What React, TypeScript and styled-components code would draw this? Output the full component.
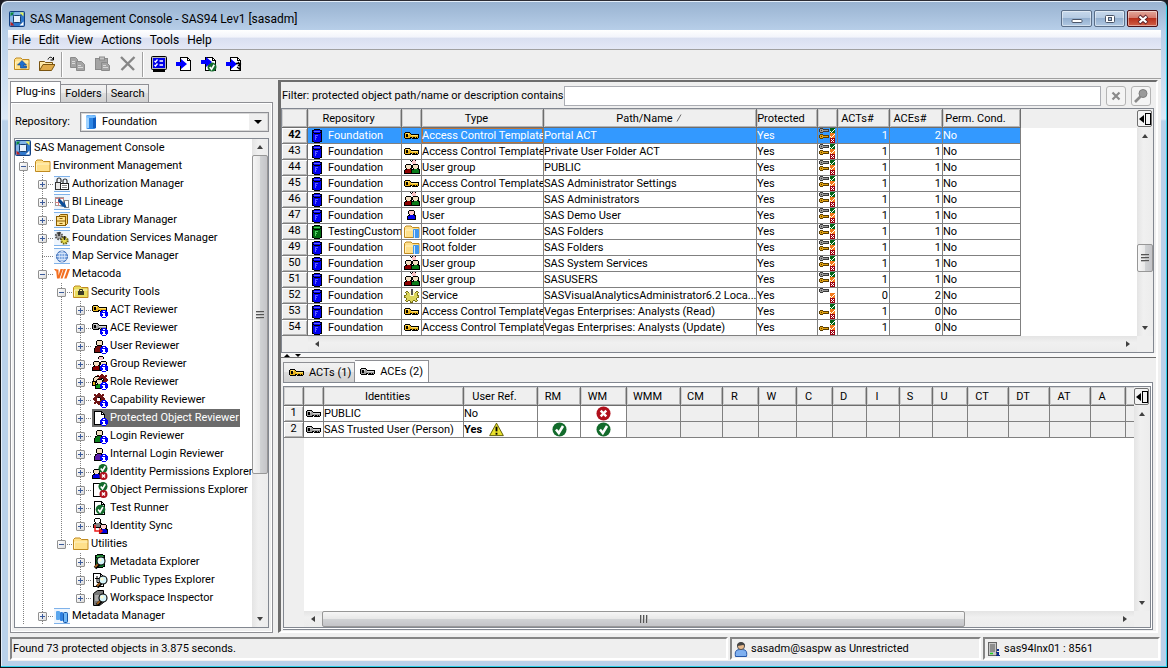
import React from 'react';
import styled, { createGlobalStyle, css } from 'styled-components';

const FACE = '#efefef';
const LINE = '#808080';
const FONT = "Roboto, Tahoma, sans-serif";

const GlobalStyle = createGlobalStyle`
  * { box-sizing: border-box; }
  body { margin: 0; background: #1c1c24; font-family: ${FONT}; font-size: 11px; line-height: 14px; color: #000; }
  button, input, select { font: inherit; color: inherit; padding: 0; margin: 0; border: 0; background: none; border-radius: 0; outline: 0; }
  svg { display: block; flex: none; }
  ul { list-style: none; margin: 0; padding: 0; }
`;

/* ---------- pixel icons ---------- */

type Palette = Record<string, string>;

const basePalette: Palette = {
  k: '#000000',
  w: '#ffffff',
  s: '#f3dfc1',
  g: '#e8b21c',
  y: '#ffe06a',
  l: '#c8c8c8',
  b: '#0000ff',
};

interface PixProps {
  rows: string[];
  pal?: Palette;
  x?: number;
  y?: number;
}

function Pix({ rows, pal = {}, x = 0, y = 0 }: PixProps) {
  const colours = { ...basePalette, ...pal };
  const out: React.ReactNode[] = [];
  rows.forEach((row, j) => {
    let i = 0;
    while (i < row.length) {
      const c = row[i];
      let n = 1;
      while (row[i + n] === c) n += 1;
      if (c !== '.') out.push(<rect key={`${i}-${j}`} x={x + i} y={y + j} width={n} height={1} fill={colours[c]} />);
      i += n;
    }
  });
  return <g shapeRendering="crispEdges">{out}</g>;
}

const KEY = [
  '.kkkkk.........',
  'kgyyygk........',
  'kgkkyggkkkkkkkk',
  'kgkkgggyyyyyyyk',
  'kgkkggggggggggk',
  'kgggggkkgkkgkgk',
  '.kkkkkk.kkkkkk.',
];
const PERSON = [
  '...kkkkk...',
  '..ksssssk..',
  '..ksssssk..',
  '..ksssssk..',
  '..ksssssk..',
  '...kkkkk...',
  '.kkcccckkk.',
  '.kccccccck.',
  'kccccccccck',
  'kccccccccck',
  'kccccccccck',
  'kccccccccck',
  'kkkkkkkkkkk',
];
const HALF_PERSON = [
  '..kkkkk..',
  '.ksssssk.',
  '.ksssssk.',
  '.ksssssk.',
  '..kssskk.',
  '.kkcccckk',
  'kccccccck',
  'kccccccck',
  'kccccccck',
  'kkkkkkkkk',
];
const INFO = [
  '..bbbb..',
  '.bbwwbb.',
  'bbbbbbbb',
  'bbwwwbbb',
  'bbbwwbbb',
  'bbbwwbbb',
  '.bwwwwb.',
  '..bbbb..',
];
const DOC = [
  'kkkkkkkk...',
  'kwwwwwwkk..',
  'kwwwwwwkwk.',
  'kwwwwwwkkkk',
  'kwwwwwwwwwk',
  'kwwwwwwwwwk',
  'kwwwwwwwwwk',
  'kwwwwwwwwwk',
  'kwwwwwwwwwk',
  'kwwwwwwwwwk',
  'kwwwwwwwwwk',
  'kwwwwwwwwwk',
  'kwwwwwwwwwk',
  'kkkkkkkkkkk',
];
const GEAR = [
  '.....cc.....',
  '.cc.cccc.cc.',
  '.cccccccccc.',
  '..cccccccc..',
  '.cccckkcccc.',
  'ccccwwwkcccc',
  'ccccwwwkcccc',
  '.cccwwwcccc.',
  '..cccccccc..',
  '.cccccccccc.',
  '.cc.cccc.cc.',
  '.....cc.....',
];
const SERVICE = [
  '.......kk......',
  '.......kk......',
  '..cc.wwkkww.cc.',
  '.cyyc.wkkw.cyyc',
  '..cyyywkkwyyyc.',
  '..cyyywkkwyyyc.',
  'ccyyyywwwwyyycc',
  'cyyyyyyyyyyyyyc',
  'ccyyyyyyyyyyycc',
  '..cyyyyyyyyyc..',
  '..cyyyyyyyyyc..',
  '.cyyccyyyccyyc.',
  '..cc..cyc..cc..',
  '......ccc......',
];
const CYLINDER = [
  '..kkkkkk..',
  'kkcccccckk',
  'kcllllllck',
  'kkcccccckk',
  'kckkkkkkck',
  'kcccccccck',
  'kcclllccck',
  'kcclccccck',
  'kccllcccck',
  'kcclccccck',
  'kcclccccck',
  'kcccccccck',
  'kkcccccckk',
  '..kkkkkk..',
];

const GREY_KEY: Palette = { g: '#a0a0a0', y: '#d8d8d8' };

const Key = ({ grey = false, y = 4 }: { grey?: boolean; y?: number }) => (
  <Pix rows={KEY} pal={grey ? GREY_KEY : undefined} y={y} />
);
const Info = () => <Pix rows={INFO} x={8} y={8} />;
const Tick = ({ x, y, r }: { x: number; y: number; r: number }) => (
  <g>
    <circle cx={x} cy={y} r={r} fill="#136b2c" />
    <path d={`M${x - r * 0.5} ${y}l${r * 0.4} ${r * 0.5}l${r * 0.6} ${-r}`} fill="none" stroke="#fff" strokeWidth={r * 0.36} />
  </g>
);
const Cross = ({ x, y, r }: { x: number; y: number; r: number }) => (
  <g>
    <circle cx={x} cy={y} r={r} fill="#b0101c" />
    <path
      d={`M${x - r * 0.4} ${y - r * 0.4}l${r * 0.8} ${r * 0.8}m0 ${-r * 0.8}l${-r * 0.8} ${r * 0.8}`}
      stroke="#fff"
      strokeWidth={r * 0.34}
    />
  </g>
);
const Lens = ({ x, y }: { x: number; y: number }) => (
  <g>
    <path d={`M${x - 2} ${y + 3}l-4 4`} stroke="#000" strokeWidth="3.6" />
    <path d={`M${x - 3} ${y + 3}l-3 3`} stroke="#a06020" strokeWidth="1.8" />
    <circle cx={x} cy={y} r="4" fill="#d4f4fa" stroke="#000" strokeWidth="1.1" />
    <circle cx={x - 1} cy={y - 1} r="1.6" fill="#fffbd0" />
  </g>
);
const Banded = ({ children }: { children: React.ReactNode }) => (
  <g>
    <path d="M0 .5h16M0 15.5h16" stroke="#7fb2ea" />
    <rect y="1" width="16" height="14" fill="#eef5fd" />
    {children}
  </g>
);
const FolderShape = ({ gold = '#ffe08a' }: { gold?: string }) => (
  <g>
    <path d="M.5 13.5V3.5L2 2h5l1.500 1.500H15v10z" fill={gold} stroke="#c08a20" />
    <path d="M1.500 12.500V6h13" fill="none" stroke="#fff3c4" />
  </g>
);

const ICONS = {
  app: (
    <g>
      <rect x=".5" y=".5" width="15" height="15" rx="1" fill="#2f78cc" stroke="#123f80" />
      <path d="M1 1h14L1 15z" fill="#a4cdf2" opacity=".7" />
      <path d="M3 3l10 10M13 3L3 13" stroke="#14498c" strokeWidth="1.200" />
      <rect x="4.500" y="4.500" width="7" height="7" rx="1" fill="#e6f1fc" stroke="#17406f" />
      <path d="M1.500 1.500h4l-4 4z" fill="#0a8a3a" />
      <path d="M14.500 1.500h-4l4 4z" fill="#e6f25a" />
      <path d="M1.500 14.500h4l-4-4z" fill="#c02020" />
      <path d="M14.500 14.500h-4l4-4z" fill="#fff" />
    </g>
  ),
  folder: <FolderShape />,
  folderUp: (
    <g>
      <FolderShape />
      <path d="M8 4.500L3.500 9H6.500v3h6v-2H9.500V9h3z" fill="#1d6fd0" stroke="#0c3f88" strokeWidth=".6" />
    </g>
  ),
  folderOpen: (
    <g>
      <path d="M.5 14.500v-9h5l1 1h7v3" fill="#ffe9a8" stroke="#7a5410" />
      <path d="M.5 14.500l3.500-6h12l-3.500 6z" fill="#e0ab4a" stroke="#7a5410" />
      <path d="M9 3.500c1-3 4-3 5 0M14.500 1v3h-3" fill="none" stroke="#000" />
    </g>
  ),
  locks: (
    <Banded>
      <path d="M3 7V4a2 2 0 0 1 4 0v2" fill="none" stroke="#333" strokeWidth="1.200" />
      <path d="M9 7V5a2 2 0 0 1 4 0v2" fill="none" stroke="#333" strokeWidth="1.200" />
      <rect x="1.500" y="6.500" width="5" height="7" fill="#e8e8e8" stroke="#333" />
      <rect x="6.500" y="7.500" width="8" height="6" fill="#fff" stroke="#222" />
      <path d="M8 9.500h5M8 11.500h5" stroke="#888" />
    </Banded>
  ),
  lineage: (
    <Banded>
      <rect x="1.500" y="3.500" width="8" height="8" fill="#fff" stroke="#999" />
      <path d="M1 4.500h9M4.500 3v9M1 8.500h9" stroke="#d88080" />
      <rect x="10.500" y="6.500" width="4" height="7" fill="#fff" stroke="#888" />
      <path d="M5 4l5 5V6.500l2.500 7L5.500 12H8L4 7z" fill="#0b4d98" />
    </Banded>
  ),
  library: (
    <Banded>
      <path d="M4.500 4.500l2-2h7v9l-2 2" fill="#f3cc6a" stroke="#8a5c00" />
      <rect x="2.500" y="4.500" width="9" height="9" fill="#ffe28e" stroke="#8a5c00" />
      <path d="M2 9h9M5.500 6.500h3M5.500 11.500h3" stroke="#8a5c00" />
    </Banded>
  ),
  services: (
    <Banded>
      <circle cx="5" cy="6" r="3.200" fill="#aaa" stroke="#555" strokeDasharray="1.500 1" strokeWidth="2" />
      <path d="M5 2v4" stroke="#222" strokeWidth="1.500" />
      <circle cx="10.500" cy="10.500" r="3.200" fill="#e6dc50" stroke="#6a6210" strokeDasharray="1.500 1" strokeWidth="2" />
      <path d="M10.500 6v4" stroke="#222" strokeWidth="1.500" />
    </Banded>
  ),
  globe: (
    <Banded>
      <circle cx="8" cy="8.500" r="5.500" fill="#7fa8e0" stroke="#3464b0" />
      <path d="M2.500 8.500h11M8 3v11M3.500 5.500h9M3.500 11.500h9" stroke="#e8f0ff" strokeWidth=".7" />
      <ellipse cx="8" cy="8.500" rx="2.700" ry="5.500" fill="none" stroke="#e8f0ff" strokeWidth=".7" />
    </Banded>
  ),
  metacoda: (
    <g fill="#f36f21">
      <path d="M0 3h2.500L2 5.500z" />
      <path d="M3 3.500h2.500v6L7.500 3H10L6.500 12.500H4z" transform="translate(-1 0)" />
      <path d="M10.500 3H13L9.500 12.500H7.500z" transform="translate(-1 0)" />
      <path d="M13.500 3H16l-3.500 9.500h-2.300z" />
    </g>
  ),
  security: (
    <g>
      <FolderShape gold="#e9dc5c" />
      <rect x="5" y="7" width="6" height="4" fill="#3c3c28" />
      <path d="M6.500 7V5.500h3V7" fill="none" stroke="#3c3c28" />
    </g>
  ),
  act: (
    <g>
      <Key y={3} />
      <Info />
    </g>
  ),
  ace: (
    <g>
      <Key grey y={3} />
      <Info />
    </g>
  ),
  userRed: (
    <g>
      <Pix rows={PERSON} pal={{ c: '#7a1010' }} x={2} y={2} />
      <Info />
    </g>
  ),
  userGreen: (
    <g>
      <Pix rows={PERSON} pal={{ c: '#0a7a1a' }} x={2} y={2} />
      <Info />
    </g>
  ),
  userPurple: (
    <g>
      <Pix rows={PERSON} pal={{ c: '#5a1aa8' }} x={2} y={2} />
      <Info />
    </g>
  ),
  groupInfo: (
    <g>
      <Pix rows={['.kkkk.', 'kppppk', 'kppppk', '.pppp.']} pal={{ p: '#ffc8cc' }} x={6} y={0} />
      <Pix rows={HALF_PERSON} pal={{ c: '#8b0000' }} x={0} y={5} />
      <Pix rows={HALF_PERSON} pal={{ c: '#0a7a1a' }} x={7} y={5} />
      <Info />
    </g>
  ),
  role: (
    <g>
      <Pix rows={GEAR} pal={{ c: '#7a1010' }} x={4} y={0} />
      <Pix rows={['..kkkk', '.kssss', 'kssss.', 'ksss..', 'ksss..']} x={1} y={2} />
      <Pix rows={['kkkk', 'kggk', 'kggk', 'kggk', 'kkkk']} x={0} y={7} />
      <Pix rows={HALF_PERSON} pal={{ c: '#0a9a1a' }} x={3} y={5} />
      <Info />
    </g>
  ),
  gear: (
    <g>
      <Pix rows={GEAR} pal={{ c: '#6e1414' }} x={1} y={1} />
      <Info />
    </g>
  ),
  docInfo: (
    <g>
      <Pix rows={DOC} x={2} y={1} />
      <Info />
    </g>
  ),
  identity: (
    <g>
      <Pix rows={HALF_PERSON} pal={{ c: '#0000e0' }} x={0} y={5} />
      <Tick x={11} y={4.5} r={4.5} />
      <Cross x={11.5} y={12} r={4} />
    </g>
  ),
  objectPerm: (
    <g>
      <Pix rows={DOC} x={1} y={1} />
      <Tick x={11} y={4.5} r={4.5} />
      <Cross x={11.5} y={12} r={4} />
    </g>
  ),
  test: (
    <g>
      <Pix rows={DOC} x={2} y={1} />
      <Tick x={8.5} y={9.5} r={4.8} />
    </g>
  ),
  sync: (
    <g>
      <Pix rows={HALF_PERSON} pal={{ c: '#808080', s: '#ffffff' }} x={1} y={0} />
      <Pix rows={HALF_PERSON} pal={{ c: '#0000e0', s: '#ffd0d0' }} x={7} y={6} />
      <path d="M3 7v6h6M7 10.500l3 2.500-3 2.500" fill="none" stroke="#f01818" strokeWidth="1.500" />
    </g>
  ),
  metaExplorer: (
    <g>
      <Pix rows={CYLINDER} pal={{ c: '#0e7a2a', l: '#50c060' }} x={3} y={0} />
      <Lens x={9} y={7} />
    </g>
  ),
  publicTypes: (
    <g>
      <Pix rows={DOC} x={1} y={1} />
      <path d="M5 4v6.500h2M3 6.500h4" fill="none" stroke="#000" />
      <Lens x={11} y={8} />
    </g>
  ),
  workspace: (
    <g>
      <path d="M1.500 3.500l4-3h6v12l-4 3h-6z" fill="#777" stroke="#000" />
      <path d="M3 6h4M3 8h4M3 10h4" stroke="#ddd" />
      <Lens x={11} y={8} />
    </g>
  ),
  metaManager: (
    <Banded>
      <rect x="2" y="3" width="4" height="9" rx="1" fill="#5aa6ee" />
      <rect x="6" y="4" width="3" height="9" rx="1" fill="#2f80e0" />
      <rect x="9.500" y="4.500" width="4" height="10" rx="1" fill="#6fb6f6" stroke="#1556a8" />
    </Banded>
  ),
  repo: (
    <g>
      <rect x="3" y="1" width="10" height="14" rx="2" fill="#2e86e4" />
      <rect x="3" y="2" width="3" height="12" fill="#9fd2ff" />
      <rect x="10" y="2" width="3" height="12" fill="#0f5cc0" />
      <ellipse cx="8" cy="2.500" rx="5" ry="1.500" fill="#7cc0ff" />
    </g>
  ),
  copy: (
    <g fill="#a4a4a4" stroke="#8a8a8a">
      <path d="M.5 1.500h5l2 2v8h-7z" />
      <path d="M6.500 5.500h5l3 3v6h-8z" />
      <path d="M2 5.500h3M2 7.500h3M8 9.500h3M8 11.500h5" stroke="#d8d8d8" />
    </g>
  ),
  paste: (
    <g fill="#a4a4a4" stroke="#8a8a8a">
      <rect x=".5" y="2.500" width="12" height="11" />
      <rect x="4.500" y="1" width="5" height="3" fill="#c4c4c4" />
      <path d="M6.500 6.500h5l3 3v5h-8z" />
      <path d="M8 9.500h3M8 11.500h5" stroke="#d8d8d8" />
    </g>
  ),
  remove: <path d="M1 1l13 13M14.500 1L1.500 14" stroke="#868686" strokeWidth="2.400" />,
  console: (
    <g>
      <rect x=".5" y=".5" width="15" height="13" rx="1" fill="#b8b8b8" stroke="#000" />
      <rect x="2" y="2" width="12" height="10" fill="#0000e8" />
      <path d="M3.500 5l1 1 2-2.500M3.500 9l1 1 2-2.500M8.500 5h3.500M8.500 9h3.500" fill="none" stroke="#fff" strokeWidth="1.300" />
      <path d="M2 15h12" stroke="#000" strokeWidth="2" />
    </g>
  ),
  importDoc: (
    <g>
      <Pix rows={DOC} x={4} y={1} />
      <path d="M0 6h5V3l6 5-6 5v-3H0z" fill="#0000ff" />
    </g>
  ),
  importTick: (
    <g>
      <Pix rows={DOC} x={4} y={1} />
      <Tick x={11} y={11} r={4.5} />
      <path d="M0 4h5V1l6 5-6 5V8H0z" fill="#0000ff" />
    </g>
  ),
  importNext: (
    <g>
      <Pix rows={DOC} x={4} y={1} />
      <path d="M0 6h5V3l6 5-6 5v-3H0z" fill="#0000ff" />
      <path d="M10 7.500h5M12 10l3-2.500M12 6l2 2v5M11 11l3 2.500" fill="none" stroke="#000" strokeWidth="1.300" />
    </g>
  ),
  blueCyl: <Pix rows={CYLINDER} pal={{ c: '#0000f0', l: '#5c5cff' }} x={4} y={1} />,
  greenCyl: <Pix rows={CYLINDER} pal={{ c: '#006b10', l: '#4fd060' }} x={4} y={1} />,
  goldKey: <Key />,
  greyKey: <Key grey />,
  group: (
    <g>
      <Pix rows={['k.kppk', '.kpppp', '..pppp', '..pppp']} pal={{ p: '#ffc8cc' }} x={6} y={0} />
      <Pix rows={HALF_PERSON} pal={{ c: '#8b0000' }} x={0} y={4} />
      <Pix rows={HALF_PERSON} pal={{ c: '#0a7a1a' }} x={7} y={4} />
    </g>
  ),
  user: <Pix rows={HALF_PERSON} pal={{ c: '#0000f0', s: '#ffc8c8' }} x={3} y={2} />,
  rootFolder: (
    <g>
      <FolderShape />
      <rect x="9" y="5" width="6" height="9" rx="1" fill="#3f97ee" />
      <rect x="10" y="6" width="1" height="8" fill="#cfe8ff" />
    </g>
  ),
  service: <Pix rows={SERVICE} pal={{ c: '#77701a', y: '#dcd65c', k: '#555555', w: '#fffbd0' }} y={1} />,
  warning: (
    <g>
      <path d="M8 1.200L15.300 14.500H.7z" fill="#e8e02c" stroke="#5c5800" strokeLinejoin="round" />
      <path d="M8 5v5" stroke="#000" strokeWidth="2" />
      <path d="M8 11.500v2" stroke="#000" strokeWidth="2" />
    </g>
  ),
  allow: <Tick x={8} y={8} r={7.5} />,
  deny: <Cross x={8} y={8} r={7.5} />,
  clear: <path d="M4.500 4.500l7 7M11.500 4.500l-7 7" stroke="#8a8a8a" strokeWidth="2.200" />,
  search: (
    <g>
      <circle cx="10" cy="5.500" r="4" fill="#9a9a9a" stroke="#7c7c7c" />
      <path d="M7.500 8.500L2 14" stroke="#8a8a8a" strokeWidth="2.600" />
    </g>
  ),
  person: (
    <g>
      <path d="M2.500 15.500c-1-6 1-7 5.500-7s6.500 1 5.500 7z" fill="#7fb0f0" stroke="#2456a8" />
      <circle cx="8" cy="5" r="3.600" fill="#e8b98c" stroke="#555" />
      <path d="M4 5c0-5 8-5 8 0-2-2-4 0-8 0z" fill="#444" />
    </g>
  ),
  server: (
    <g>
      <rect x="2.500" y="1.500" width="8" height="13" fill="#c8c8c8" stroke="#666" />
      <path d="M4 4h5M4 6h5M4 8h5M4 10h5" stroke="#555" />
      <path d="M4 12.500h3" stroke="#20d020" strokeWidth="1.500" />
      <Pix rows={['.nn..', '.nn..', '.....', 'nnn..', '.nn..', '.nn..', 'nnnn.']} pal={{ n: '#0a2a8a' }} x={10} y={8} />
    </g>
  ),
};

type IconName = keyof typeof ICONS;

const Icon = ({ name, size = 16 }: { name: IconName; size?: number }) => (
  <svg width={size} height={size} viewBox="0 0 16 16" aria-hidden="true">
    {ICONS[name]}
  </svg>
);

const MINI_KEY = ['.kkk......', 'kgggkkkkkk', 'kgkggggggk', 'kgggkkkkkk', '.kkk......'];
const CHECK_PIX = ['ccccc', 'ccccw', 'cccwc', 'wcwcc', 'cwccc'];
const CROSS_PIX = ['ccccc', 'cwcwc', 'ccwcc', 'cwcwc', 'ccccc'];

const AccessIcon = ({ flags }: { flags: string }) => (
  <svg width="17" height="15" viewBox="-1 0 17 15" aria-hidden="true">
    {flags.includes('e') && <Pix rows={MINI_KEY} pal={{ k: '#3a3a3a', g: '#9a9a9a' }} />}
    {flags.includes('t') && <Pix rows={MINI_KEY} pal={{ k: '#5a3c00', g: '#e0a010' }} y={6} />}
    {flags.includes('g') && <Pix rows={CHECK_PIX} pal={{ c: '#006414' }} x={11} />}
    <Pix rows={CHECK_PIX} pal={{ c: '#f47a1a' }} x={11} y={5} />
    <Pix rows={CROSS_PIX} pal={{ c: '#9a0010' }} x={11} y={10} />
  </svg>
);

/* ---------- window frame ---------- */

const Frame = styled.div`
  min-height: 100vh;
  display: flex;
  flex-direction: column;
  padding: 0 6px 6px 7px;
  border: 1px solid #111318;
  border-top-color: #2c2c34;
  border-radius: 7px 7px 0 0;
  background: linear-gradient(180deg, #98b2d0 0, #b8cfe9 30px, #dce9f7 118px, #b9d1ea 120px);
  box-shadow: inset -1px -1px #2fd0ea, inset 1px 1px #e4eef9;
`;

const TitleBar = styled.header`
  display: flex;
  align-items: center;
  height: 29px;
  padding: 6px 3px 0 1px;
  gap: 5px;
  h1 {
    flex: 1;
    margin: 0;
    font-size: 12px;
    font-weight: 400;
  }
`;

const WindowButtons = styled.div`
  display: flex;
  gap: 2px;
`;

const WindowButton = styled.button<{ $close?: boolean }>`
  display: flex;
  align-items: center;
  justify-content: center;
  width: 31px;
  height: 17px;
  border: 1px solid ${(p) => (p.$close ? '#4a1018' : '#5a6e88')};
  border-radius: 2px;
  box-shadow: inset 0 0 0 1px rgba(255, 255, 255, 0.45);
  background: ${(p) =>
    p.$close
      ? 'linear-gradient(180deg, #e3a89c 0, #d4776a 48%, #b8301c 50%, #d06048 100%)'
      : 'linear-gradient(180deg, #c6d8ec 0, #b4cae2 48%, #94b0d0 50%, #b0c8e2 100%)'};
`;

const Client = styled.div`
  flex: 1;
  display: flex;
  flex-direction: column;
  background: ${FACE};
`;

const MenuBar = styled.nav`
  display: flex;
  gap: 8px;
  height: 20px;
  padding: 3px 4px;
  border-bottom: 1px solid #a0a0a0;
  background: linear-gradient(180deg, #fff 0, #f2f4fb 38%, #d9dff0 42%, #e4e8f6 100%);
`;

const MenuButton = styled.button`
  height: 14px;
  font-size: 12px;
`;

const ToolBar = styled.div`
  display: flex;
  align-items: center;
  height: 29px;
  padding-left: 1px;
  border-bottom: 1px solid #a0a0a0;
`;

const ToolButton = styled.button`
  display: flex;
  align-items: center;
  justify-content: center;
  width: 25px;
  height: 26px;
`;

const ToolDivider = styled.span`
  width: 2px;
  height: 25px;
  margin: 0 2px;
  border-left: 1px solid #a0a0a0;
  border-right: 1px solid #fff;
`;

const Main = styled.main`
  flex: 1;
  display: grid;
  grid-template-columns: 265px minmax(0, 1fr);
  gap: 3px;
  padding: 1px 2px 4px;
`;

/* ---------- scroll bars ---------- */

const Arrow = styled.button<{ $dir: 'up' | 'down' | 'left' | 'right' }>`
  flex: none;
  display: flex;
  align-items: center;
  justify-content: center;
  width: ${(p) => (p.$dir === 'left' || p.$dir === 'right' ? 18 : 16)}px;
  height: 16px;
  &::before {
    content: '';
    border: 3px solid transparent;
    ${(p) => p.$dir === 'up' && css`border-bottom: 4px solid #404040; border-top: 0;`}
    ${(p) => p.$dir === 'down' && css`border-top: 4px solid #404040; border-bottom: 0;`}
    ${(p) => p.$dir === 'left' && css`border-right: 4px solid #404040; border-left: 0;`}
    ${(p) => p.$dir === 'right' && css`border-left: 4px solid #404040; border-right: 0;`}
  }
`;

const Bar = styled.div<{ $row?: boolean }>`
  flex: none;
  display: flex;
  flex-direction: ${(p) => (p.$row ? 'row' : 'column')};
  ${(p) => (p.$row ? 'height: 16px;' : 'width: 16px;')}
  background: linear-gradient(${(p) => (p.$row ? '180deg' : '90deg')}, #e4e4e4, #f0f0f0 40%, #ececec);
`;

const Track = styled.div<{ $row?: boolean; $before: number }>`
  flex: 1;
  min-height: 0;
  display: flex;
  flex-direction: ${(p) => (p.$row ? 'row' : 'column')};
  &::before {
    content: '';
    flex: 0 0 ${(p) => p.$before}%;
  }
`;

const Thumb = styled.div<{ $row?: boolean; $size: number }>`
  flex: 0 0 ${(p) => p.$size}%;
  display: flex;
  align-items: center;
  justify-content: center;
  border: 1px solid #979797;
  border-radius: 2px;
  background: linear-gradient(${(p) => (p.$row ? '180deg' : '90deg')}, #f6f6f6 0, #e8e8e8 48%, #d0d2d4 52%, #c4c4c8 100%);
  &::before {
    content: '';
    width: 8px;
    height: 8px;
    background: repeating-linear-gradient(${(p) => (p.$row ? '90deg' : '180deg')}, #555 0 1px, #bbb 1px 2px, transparent 2px 3px);
  }
`;

interface ScrollProps {
  row?: boolean;
  before?: number;
  size?: number;
}

const ScrollBar = ({ row, before = 0, size }: ScrollProps) => (
  <Bar $row={row}>
    <Arrow $dir={row ? 'left' : 'up'} aria-label={row ? 'Scroll left' : 'Scroll up'} />
    <Track $row={row} $before={before}>
      {size !== undefined && <Thumb $row={row} $size={size} />}
    </Track>
    <Arrow $dir={row ? 'right' : 'down'} aria-label={row ? 'Scroll right' : 'Scroll down'} />
  </Bar>
);

/* ---------- left panel ---------- */

const Side = styled.section`
  display: flex;
  flex-direction: column;
  padding-top: 1px;
`;

const TabStrip = styled.div`
  display: flex;
  align-items: flex-end;
  height: 21px;
`;

const Tab = styled.button<{ $active?: boolean }>`
  display: flex;
  align-items: center;
  gap: 4px;
  height: 18px;
  padding: 0 4px;
  border: 1px solid #8e8f94;
  border-left-width: ${(p) => (p.$active ? 1 : 0)}px;
  border-bottom: 0;
  background: linear-gradient(180deg, #f2f2f2 0, #ebebeb 48%, #dddddd 50%, #d0d0d0 100%);
  ${(p) =>
    p.$active &&
    css`
      height: 22px;
      margin-bottom: -1px;
      padding: 0 5px 2px;
      background: #fff;
    `}
`;

const SideBody = styled.div`
  flex: 1;
  display: flex;
  flex-direction: column;
  margin-right: 2px;
  padding: 9px 3px 4px;
  border: 1px solid #8e8f94;
  box-shadow: inset 0 0 0 1px #fff;
`;

const RepoRow = styled.div`
  display: flex;
  align-items: center;
  padding-left: 1px;
  margin-bottom: 6px;
  label {
    width: 65px;
  }
`;

const SelectBox = styled.div`
  flex: 1;
  display: flex;
  align-items: center;
  height: 20px;
  padding: 0 4px 0 2px;
  border: 1px solid #8e8f94;
  background: #fff;
  box-shadow: inset 0 0 0 1px #d8d8d8;
  select {
    flex: 1;
    height: 16px;
    appearance: none;
    padding-left: 3px;
  }
`;

const DropArrow = styled.span`
  display: flex;
  align-items: center;
  justify-content: center;
  width: 18px;
  height: 16px;
  margin-right: -3px;
  background: ${FACE};
  &::before {
    content: '';
    border: 4px solid transparent;
    border-top-color: #000;
    border-bottom: 0;
  }
`;

const TreeBox = styled.div`
  flex: 1;
  display: flex;
  border: 1px solid #828790;
  background: #fff;
`;

const TreeList = styled.ul`
  flex: 1;
  min-width: 0;
  overflow: hidden;
`;

const TreeRow = styled.li`
  display: flex;
  align-items: center;
  height: 18px;
  white-space: nowrap;
`;

const dots = (deg: number) => `repeating-linear-gradient(${deg}deg, #808080 0 1px, transparent 1px 2px)`;

const Guide = styled.span<{ $kind: string }>`
  flex: none;
  display: flex;
  align-items: center;
  width: 19px;
  height: 18px;
  padding-left: 4px;
  background-repeat: no-repeat;
  ${(p) => p.$kind === '|' && css`background-image: ${dots(180)}; background-size: 1px 18px; background-position: 8px 0;`}
  ${(p) => p.$kind === 't' && css`background-image: ${dots(180)}, ${dots(90)}; background-size: 1px 18px, 11px 1px; background-position: 8px 0, 8px 9px;`}
  ${(p) => p.$kind === 'l' && css`background-image: ${dots(180)}, ${dots(90)}; background-size: 1px 9px, 11px 1px; background-position: 8px 0, 8px 9px;`}
`;

const Expander = styled.button<{ $open?: boolean }>`
  width: 9px;
  height: 9px;
  border: 1px solid #919191;
  border-radius: 1px;
  background:
    linear-gradient(#3a5a9a, #3a5a9a) center / 5px 1px no-repeat,
    linear-gradient(#3a5a9a, #3a5a9a) center / ${(p) => (p.$open ? '0 0' : '1px 5px')} no-repeat,
    linear-gradient(135deg, #fff, #dcdcdc);
`;

const NodeLabel = styled.span<{ $selected?: boolean; $root?: boolean }>`
  display: flex;
  align-items: center;
  gap: ${(p) => (p.$root ? 3 : 2)}px;
  height: 18px;
  margin-left: ${(p) => (p.$root ? 0 : 1)}px;
  padding-right: ${(p) => (p.$selected ? 1 : 0)}px;
  ${(p) => p.$selected && 'background: #6b6b6b; color: #fff;'}
`;

/* guide codes: "|" passes through, "t" branches, "l" is the last branch, " " is empty */
const tree: [string, string, IconName, string][] = [
  ['', '', 'app', 'SAS Management Console'],
  ['t', '-', 'folder', 'Environment Management'],
  ['|t', '+', 'locks', 'Authorization Manager'],
  ['|t', '+', 'lineage', 'BI Lineage'],
  ['|t', '+', 'library', 'Data Library Manager'],
  ['|t', '+', 'services', 'Foundation Services Manager'],
  ['|t', '', 'globe', 'Map Service Manager'],
  ['|t', '-', 'metacoda', 'Metacoda'],
  ['||t', '-', 'security', 'Security Tools'],
  ['|||t', '+', 'act', 'ACT Reviewer'],
  ['|||t', '+', 'ace', 'ACE Reviewer'],
  ['|||t', '+', 'userRed', 'User Reviewer'],
  ['|||t', '+', 'groupInfo', 'Group Reviewer'],
  ['|||t', '+', 'role', 'Role Reviewer'],
  ['|||t', '+', 'gear', 'Capability Reviewer'],
  ['|||t', '+', 'docInfo', 'Protected Object Reviewer'],
  ['|||t', '+', 'userGreen', 'Login Reviewer'],
  ['|||t', '+', 'userPurple', 'Internal Login Reviewer'],
  ['|||t', '+', 'identity', 'Identity Permissions Explorer'],
  ['|||t', '+', 'objectPerm', 'Object Permissions Explorer'],
  ['|||t', '+', 'test', 'Test Runner'],
  ['|||l', '+', 'sync', 'Identity Sync'],
  ['||l', '-', 'folder', 'Utilities'],
  ['|| t', '+', 'metaExplorer', 'Metadata Explorer'],
  ['|| t', '+', 'publicTypes', 'Public Types Explorer'],
  ['|| l', '+', 'workspace', 'Workspace Inspector'],
  ['|t', '+', 'metaManager', 'Metadata Manager'],
];

/* ---------- right panel ---------- */

const Work = styled.section`
  display: flex;
  flex-direction: column;
  margin-right: 1px;
  border: 2px solid #6d6d6d;
  border-left-width: 3px;
  border-right: 2px solid #fff;
  border-bottom: 2px solid #fff;
  min-width: 0;
`;

const FilterRow = styled.div`
  display: flex;
  align-items: center;
  height: 26px;
  padding: 1px 5px 0 1px;
  label {
    width: 282px;
    white-space: nowrap;
  }
  input {
    flex: 1;
    min-width: 0;
    height: 20px;
    padding: 0 3px;
    border: 1px solid #abadb3;
    background: #fff;
  }
`;

const FilterButton = styled.button`
  display: flex;
  align-items: center;
  justify-content: center;
  width: 20px;
  height: 20px;
  margin-left: 5px;
  border: 1px solid #b4b4b4;
  border-radius: 3px;
  background: #f4f4f4;
`;

const GridBox = styled.div<{ $fill?: boolean }>`
  display: flex;
  flex-direction: column;
  ${(p) => p.$fill && 'flex: 1;'}
  min-width: 0;
  margin-right: ${(p) => (p.$fill ? 0 : 2)}px;
  border: 1px solid #828790;
  background: ${FACE};
`;

const GridMain = styled.div`
  flex: 1;
  display: flex;
  min-width: 0;
`;

const Viewport = styled.div<{ $stub: number }>`
  flex: 1;
  min-width: 0;
  overflow: hidden;
  background: linear-gradient(${FACE}, ${FACE}) 0 0 / 100% 19px no-repeat, linear-gradient(${FACE}, ${FACE}) 0 0 / ${(p) => p.$stub}px 100% no-repeat, #fff;
`;

const SideControls = styled.div`
  display: flex;
  flex-direction: column;
  width: 16px;
  > div {
    flex: 1;
  }
`;

const ColumnButton = styled.button`
  display: flex;
  align-items: center;
  justify-content: center;
  gap: 1px;
  flex: none;
  width: 15px;
  height: 17px;
  margin: 1px 0;
  border: 1px solid #707070;
  border-radius: 2px;
  background: #f4f4f4;
  &::before {
    content: '';
    border: 4px solid transparent;
    border-left: 0;
    border-right: 5px solid #000;
  }
  &::after {
    content: '';
    width: 4px;
    height: 10px;
    border: 1px solid #000;
  }
`;

const BottomBar = styled.div<{ $stub: number }>`
  display: flex;
  padding: 0 16px 0 ${(p) => p.$stub}px;
  > div {
    flex: 1;
  }
`;

const Table = styled.table<{ $width: number }>`
  width: ${(p) => p.$width}px;
  table-layout: fixed;
  border-collapse: separate;
  border-spacing: 0;
  white-space: nowrap;
`;

const HeadCell = styled.th<{ $sorted?: boolean }>`
  height: 19px;
  padding: 1px ${(p) => (p.$sorted ? 2 : 12)}px 0 0;
  overflow: hidden;
  font-weight: 400;
  border-right: 1px solid #6d6d6d;
  border-bottom: 1px solid #6d6d6d;
  background: ${FACE};
  box-shadow: inset 1px 1px #d0d0d0, inset -1px -1px #b4b4b4;
  svg {
    display: inline-block;
    margin-left: 3px;
  }
`;

const RowHead = styled.th<{ $current?: boolean }>`
  height: 16px;
  padding: 0 0 1px;
  font-weight: ${(p) => (p.$current ? 700 : 400)};
  line-height: 14px;
  text-align: center;
  border-right: 1px solid #6d6d6d;
  border-bottom: 1px solid ${LINE};
  background: ${FACE};
  box-shadow: inset 1px 1px #fff, inset -1px -1px #b4b4b4;
`;

const Cell = styled.td<{ $blank?: boolean; $num?: boolean; $focus?: boolean; $bold?: boolean }>`
  height: 16px;
  padding: 0;
  overflow: hidden;
  line-height: 14px;
  border-right: 1px solid ${LINE};
  border-bottom: 1px solid ${LINE};
  text-align: ${(p) => (p.$num ? 'right' : 'left')};
  font-weight: ${(p) => (p.$bold ? 700 : 400)};
  background: ${(p) => (p.$blank ? FACE : 'transparent')};
  ${(p) => p.$num && 'padding-right: 1px;'}
  ${(p) => p.$focus && 'box-shadow: inset 0 0 0 1px #b8743c;'}
`;

const CellFlex = styled.span<{ $gap?: number; $center?: boolean }>`
  display: flex;
  align-items: flex-start;
  justify-content: ${(p) => (p.$center ? 'center' : 'flex-start')};
  gap: ${(p) => p.$gap ?? 0}px;
  height: 15px;
  line-height: 16px;
  overflow: hidden;
`;

const Row = styled.tr<{ $selected?: boolean }>`
  background: #fff;
  ${(p) => p.$selected && 'background: #3399ff; color: #fff;'}
  ${RowHead} {
    color: #000;
  }
`;

const Splitter = styled.div`
  display: flex;
  gap: 5px;
  align-items: center;
  height: 5px;
  padding-left: 3px;
  border-bottom: 1px solid #6d6d6d;
  background: #f8f8f8;
  span {
    border: 3px solid transparent;
    border-bottom: 3px solid #000;
    border-top: 0;
  }
  span + span {
    border-bottom: 0;
    border-top: 3px solid #000;
  }
`;

const Detail = styled.div`
  flex: 1;
  display: flex;
  flex-direction: column;
  min-width: 0;
  padding: 2px 3px 1px 2px;
`;

const DetailTabs = styled.div`
  display: flex;
  align-items: flex-end;
  height: 22px;
  ${Tab} {
    height: 20px;
    padding: 0 3px 0 5px;
    border-left-width: 1px;
    & + ${Tab} {
      height: 23px;
      border-left-width: 0;
      padding: 0 5px 1px;
    }
  }
`;

const DetailBody = styled.div`
  flex: 1;
  display: flex;
  min-width: 0;
  padding: 3px 1px 1px 0;
  border: 1px solid #828790;
  border-left: 0;
  background: #fff;
`;

const StatusBar = styled.footer`
  display: grid;
  grid-template-columns: minmax(0, 718px) minmax(0, 251px) minmax(0, 1fr);
  gap: 2px;
  padding: 0 1px 1px 2px;
`;

const StatusCell = styled.div`
  display: flex;
  align-items: center;
  gap: 2px;
  height: 23px;
  padding-left: 1px;
  border: 2px solid #fff;
  border-top-color: #858585;
  border-left-color: #858585;
  white-space: nowrap;
`;

/* ---------- data ---------- */

type ObjectRow = [number, string, IconName, string, string, string, number, number];

const objects: ObjectRow[] = [
  [42, 'Foundation', 'goldKey', 'Access Control Template', 'Portal ACT', 'etg', 1, 2],
  [43, 'Foundation', 'goldKey', 'Access Control Template', 'Private User Folder ACT', 'etg', 1, 1],
  [44, 'Foundation', 'group', 'User group', 'PUBLIC', 'etg', 1, 1],
  [45, 'Foundation', 'goldKey', 'Access Control Template', 'SAS Administrator Settings', 'etg', 1, 1],
  [46, 'Foundation', 'group', 'User group', 'SAS Administrators', 'etg', 1, 1],
  [47, 'Foundation', 'user', 'User', 'SAS Demo User', 'etg', 1, 1],
  [48, 'TestingCustom', 'rootFolder', 'Root folder', 'SAS Folders', 'etg', 1, 1],
  [49, 'Foundation', 'rootFolder', 'Root folder', 'SAS Folders', 'etg', 1, 1],
  [50, 'Foundation', 'group', 'User group', 'SAS System Services', 'etg', 1, 1],
  [51, 'Foundation', 'group', 'User group', 'SASUSERS', 'etg', 1, 1],
  [52, 'Foundation', 'service', 'Service', 'SASVisualAnalyticsAdministrator6.2 Loca...', 'e', 0, 2],
  [53, 'Foundation', 'goldKey', 'Access Control Template', 'Vegas Enterprises: Analysts (Read)', 'tg', 1, 0],
  [54, 'Foundation', 'goldKey', 'Access Control Template', 'Vegas Enterprises: Analysts (Update)', 'tg', 1, 0],
];

const objectColumns: [string, number][] = [
  ['', 26],
  ['Repository', 94],
  ['', 20],
  ['Type', 122],
  ['Path/Name', 213],
  ['Protected', 61],
  ['', 20],
  ['ACTs#', 52],
  ['ACEs#', 53],
  ['Perm. Cond.', 78],
];

const aceColumns: [string, number][] = [
  ['', 20],
  ['', 20],
  ['Identities', 140],
  ['User Ref.', 74],
  ['RM', 43],
  ['WM', 46],
  ['WMM', 54],
  ['CM', 42],
  ['R', 36],
  ['W', 38],
  ['C', 36],
  ['D', 34],
  ['I', 33],
  ['S', 33],
  ['U', 35],
  ['CT', 41],
  ['DT', 41],
  ['AT', 41],
  ['A', 35],
  ['', 40],
];

const sum = (cols: [string, number][]) => cols.reduce((n, c) => n + c[1], 0);

const SortMark = () => (
  <svg width="6" height="8" aria-hidden="true">
    <path d="M1 7.500L5 .5" stroke="#666" />
  </svg>
);

const TableHead = ({ columns }: { columns: [string, number][] }) => (
  <>
    <colgroup>
      {columns.map((c, i) => (
        <col key={i} width={c[1]} />
      ))}
    </colgroup>
    <thead>
      <tr>
        {columns.map((c, i) => (
          <HeadCell key={i} scope="col" $sorted={c[0] === 'Path/Name'}>
            {c[0]}
            {c[0] === 'Path/Name' && <SortMark />}
          </HeadCell>
        ))}
      </tr>
    </thead>
  </>
);

const Blanks = ({ count }: { count: number }) => (
  <>
    {Array.from({ length: count }, (_, i) => (
      <Cell key={i} $blank />
    ))}
  </>
);

/* ---------- page ---------- */

const tools: (IconName | null)[] = [
  'folderUp', 'folderOpen', null, 'copy', 'paste', 'remove', null, 'console', 'importDoc', 'importTick', 'importNext',
];
const toolNames: Record<string, string> = {
  folderUp: 'Up one level', folderOpen: 'Open', copy: 'Copy', paste: 'Paste', remove: 'Delete',
  console: 'Options', importDoc: 'Export', importTick: 'Export tests', importNext: 'Export all',
};

export default function App() {
  return (
    <>
      <GlobalStyle />
      <Frame>
        <TitleBar>
          <Icon name="app" />
          <h1>SAS Management Console - SAS94 Lev1 [sasadm]</h1>
          <WindowButtons>
            <WindowButton aria-label="Minimize">
              <svg width="12" height="12"><rect x="1" y="6.500" width="10" height="3" rx="1" fill="#fff" stroke="#4a5568" /></svg>
            </WindowButton>
            <WindowButton aria-label="Maximize">
              <svg width="12" height="12">
                <rect x="1.500" y="2.500" width="9" height="7" rx="1" fill="#fff" stroke="#4a5568" />
                <rect x="4.500" y="4.500" width="3" height="3" fill="#a8c0dc" stroke="#4a5568" />
              </svg>
            </WindowButton>
            <WindowButton $close aria-label="Close">
              <svg width="12" height="12">
                <path d="M2 3l8 7M10 3l-8 7" stroke="#5a2028" strokeWidth="4" />
                <path d="M2.500 3.500l7 6M9.500 3.500l-7 6" stroke="#fff" strokeWidth="2.300" />
              </svg>
            </WindowButton>
          </WindowButtons>
        </TitleBar>
        <Client>
          <MenuBar>
            {['File', 'Edit', 'View', 'Actions', 'Tools', 'Help'].map((m) => (
              <MenuButton key={m}>{m}</MenuButton>
            ))}
          </MenuBar>
          <ToolBar>
            {tools.map((t, i) =>
              t ? (
                <ToolButton key={i} aria-label={toolNames[t]}>
                  <Icon name={t} />
                </ToolButton>
              ) : (
                <ToolDivider key={i} />
              ),
            )}
          </ToolBar>
          <Main>
            <Side>
              <TabStrip>
                <Tab $active>Plug-ins</Tab>
                <Tab>Folders</Tab>
                <Tab>Search</Tab>
              </TabStrip>
              <SideBody>
                <RepoRow>
                  <label htmlFor="repository">Repository:</label>
                  <SelectBox>
                    <Icon name="repo" />
                    <select id="repository">
                      <option>Foundation</option>
                    </select>
                    <DropArrow />
                  </SelectBox>
                </RepoRow>
                <TreeBox>
                  <TreeList>
                    {tree.map(([guides, state, icon, label]) => (
                      <TreeRow key={label}>
                        {guides.split('').map((g, i) => (
                          <Guide key={i} $kind={g}>
                            {i === guides.length - 1 && state && (
                              <Expander $open={state === '-'} aria-label={state === '-' ? 'Collapse' : 'Expand'} />
                            )}
                          </Guide>
                        ))}
                        <NodeLabel $root={!guides} $selected={icon === 'docInfo'}>
                          <Icon name={icon} />
                          {label}
                        </NodeLabel>
                      </TreeRow>
                    ))}
                  </TreeList>
                  <ScrollBar size={70} />
                </TreeBox>
              </SideBody>
            </Side>
            <Work>
              <FilterRow>
                <label htmlFor="filter">Filter: protected object path/name or description contains</label>
                <input id="filter" type="text" />
                <FilterButton aria-label="Clear filter">
                  <Icon name="clear" />
                </FilterButton>
                <FilterButton aria-label="Find">
                  <Icon name="search" />
                </FilterButton>
              </FilterRow>
              <GridBox>
                <GridMain>
                  <Viewport $stub={26}>
                    <Table $width={sum(objectColumns)}>
                      <TableHead columns={objectColumns} />
                      <tbody>
                        {objects.map(([id, repo, icon, type, name, flags, acts, aces]) => (
                          <Row key={id} $selected={id === 42}>
                            <RowHead scope="row" $current={id === 42}>{id}</RowHead>
                            <Cell>
                              <CellFlex $gap={4}>
                                <Icon name={repo === 'Foundation' ? 'blueCyl' : 'greenCyl'} />
                                {repo}
                              </CellFlex>
                            </Cell>
                            <Cell><CellFlex $center><Icon name={icon} /></CellFlex></Cell>
                            <Cell $focus={id === 42}>{type}</Cell>
                            <Cell>{name}</Cell>
                            <Cell>Yes</Cell>
                            <Cell><CellFlex><AccessIcon flags={flags} /></CellFlex></Cell>
                            <Cell $num>{acts}</Cell>
                            <Cell $num>{aces}</Cell>
                            <Cell>No</Cell>
                          </Row>
                        ))}
                      </tbody>
                    </Table>
                  </Viewport>
                  <SideControls>
                    <ColumnButton aria-label="Choose columns" />
                    <ScrollBar before={57} size={16} />
                  </SideControls>
                </GridMain>
                <BottomBar $stub={26}>
                  <ScrollBar row />
                </BottomBar>
              </GridBox>
              <Splitter>
                <span />
                <span />
              </Splitter>
              <Detail>
                <DetailTabs>
                  <Tab><Icon name="goldKey" />ACTs (1)</Tab>
                  <Tab $active><Icon name="greyKey" />ACEs (2)</Tab>
                </DetailTabs>
                <DetailBody>
                  <GridBox $fill>
                    <GridMain>
                      <Viewport $stub={20}>
                        <Table $width={sum(aceColumns)}>
                          <TableHead columns={aceColumns} />
                          <tbody>
                            <Row>
                              <RowHead scope="row">1</RowHead>
                              <Cell><CellFlex $center><Icon name="greyKey" /></CellFlex></Cell>
                              <Cell>PUBLIC</Cell>
                              <Cell>No</Cell>
                              <Cell />
                              <Cell><CellFlex $center><Icon name="deny" size={15} /></CellFlex></Cell>
                              <Blanks count={14} />
                            </Row>
                            <Row>
                              <RowHead scope="row">2</RowHead>
                              <Cell><CellFlex $center><Icon name="greyKey" /></CellFlex></Cell>
                              <Cell>SAS Trusted User (Person)</Cell>
                              <Cell $bold><CellFlex $gap={7}>Yes <Icon name="warning" size={15} /></CellFlex></Cell>
                              <Cell><CellFlex $center><Icon name="allow" size={15} /></CellFlex></Cell>
                              <Cell><CellFlex $center><Icon name="allow" size={15} /></CellFlex></Cell>
                              <Blanks count={14} />
                            </Row>
                          </tbody>
                        </Table>
                      </Viewport>
                      <SideControls>
                        <ColumnButton aria-label="Choose columns" />
                        <ScrollBar />
                      </SideControls>
                    </GridMain>
                    <BottomBar $stub={20}>
                      <ScrollBar row before={0} size={81} />
                    </BottomBar>
                  </GridBox>
                </DetailBody>
              </Detail>
            </Work>
          </Main>
          <StatusBar>
            <StatusCell>Found 73 protected objects in 3.875 seconds.</StatusCell>
            <StatusCell>
              <Icon name="person" />
              sasadm@saspw as Unrestricted
            </StatusCell>
            <StatusCell>
              <Icon name="server" />
              sas94lnx01 : 8561
            </StatusCell>
          </StatusBar>
        </Client>
      </Frame>
    </>
  );
}
